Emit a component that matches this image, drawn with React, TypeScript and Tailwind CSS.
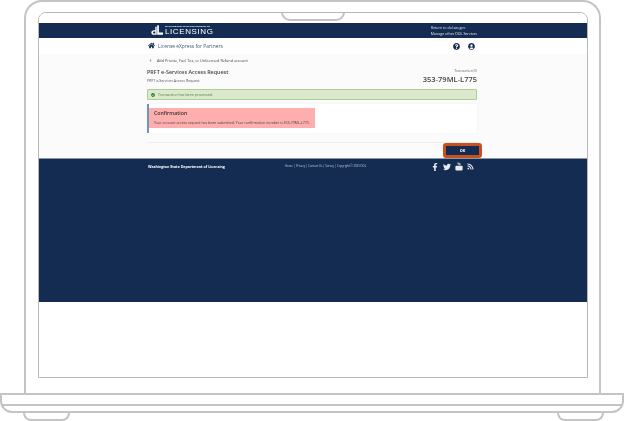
import { FaFacebookF, FaTwitter, FaRss, FaHome, FaQuestionCircle, FaUserCircle, FaCheckCircle, FaChevronLeft } from "react-icons/fa";

function Foot() {
  return <div className="w-[47px] h-[8px] border-2 border-t-0 border-[#c4c4c4] rounded-b-[8px]" />;
}

function DolMark() {
  return (
    <svg viewBox="0 0 14 12" className="w-[12px] h-[11px]" fill="white">
      <path d="M7.2 0h2v8.4H14V11H7.2z" />
      <path d="M5 1.5h1.6V11H3.4C1.6 11 .4 9.9.4 8.3S1.6 5.6 3.4 5.6H5zM3.6 7.2c-.7 0-1.2.4-1.2 1.1s.5 1.1 1.2 1.1H5V7.2z" />
    </svg>
  );
}

function StackedYoutube() {
  return (
    <svg viewBox="0 0 10 10" className="w-[8px] h-[9px]" fill="#e8ebf0">
      <path d="M2.6 0h.8l.5 1.2L4.4 0h.8l-.9 2v1.4h-.7V2zM6 .7c.5 0 .8.3.8.8v1.1c0 .5-.3.8-.8.8s-.8-.3-.8-.8V1.500c0-.5.3-.8.8-.8z" />
      <rect x="0.5" y="4.2" width="9" height="5.8" rx="1.2" />
    </svg>
  );
}

export default function App() {
  return (
    <div className="relative w-[624px] h-[421px] bg-white overflow-hidden font-['Open_Sans',sans-serif]">
      {/* Lid */}
      <div className="ml-[24px] w-[577px] h-[393px] border-2 border-b-0 border-[#c4c4c4] rounded-t-[18px] pl-[12px] pr-[11px] pt-[10px]">
        <div className="relative h-[366px] border-[1.5px] border-[#b8b8b8] rounded-t-[8px] overflow-hidden flex flex-col">
          <div className="absolute left-[242px] top-[-2px] w-[64px] h-[10px] border-2 border-t-0 border-[#c4c4c4] rounded-b-[9px] bg-white" />

          <div className="h-[10px] shrink-0 bg-white" />
          <div className="blur-[0.3px] flex flex-col">
            {/* Top bar */}
            <header className="h-[15px] shrink-0 bg-[#152c52] flex justify-center">
              <div className="w-[330px] mr-[2px] flex items-center justify-between text-white">
                <div className="flex items-end gap-[2px] pl-[4px]">
                  <DolMark />
                  <div className="flex flex-col">
                    <span className="text-[2.4px] leading-[3px] font-bold">WASHINGTON STATE DEPARTMENT OF</span>
                    <span className="text-[8px] leading-[8px] tracking-[0.6px] font-['Liberation_Sans',sans-serif]">LICENSING</span>
                  </div>
                </div>
                <div className="text-[3.6px] leading-[6px] text-[#dfe5ee]">
                  <div>Return to dol.wa.gov</div>
                  <div>Manage other DOL Services</div>
                </div>
              </div>
            </header>

            {/* Nav row */}
            <nav className="h-[16px] shrink-0 bg-white flex justify-center">
              <div className="w-[330px] mr-[2px] flex items-center justify-between">
                <div className="flex items-center gap-[3px] pl-[1px]">
                  <FaHome className="w-[7px] h-[7px] text-[#152c52]" />
                  <span className="text-[4.9px] pt-[1px] text-[#3f5a78]">License eXpress for Partners</span>
                </div>
                <div className="flex items-center gap-[8px] pr-[2px]">
                  <FaQuestionCircle className="w-[7px] h-[7px] text-[#152c52]" />
                  <FaUserCircle className="w-[7px] h-[7px] text-[#152c52]" />
                </div>
              </div>
            </nav>

            {/* Page body */}
            <main className="h-[104px] shrink-0 bg-[#fbfbfb] flex justify-center">
              <div className="w-[330px] mr-[2px] flex flex-col">
                <div className="flex items-center gap-[5px] pl-[2px] pt-[2px] h-[11px] text-[#444]">
                  <FaChevronLeft className="w-[3px] h-[3px]" />
                  <span className="text-[3.75px]">Add Private, Fuel Tax, or Unlicensed Refund account</span>
                </div>
                <div className="flex justify-between mt-[3px] h-[21px]">
                  <div>
                    <div className="text-[5.4px] leading-[9px] font-semibold text-[#444]">PRFT e-Services Access Request</div>
                    <div className="text-[3.6px] leading-[7px] text-[#555]">PRFT e-Services Access Request</div>
                  </div>
                  <div className="text-right">
                    <div className="text-[3.4px] leading-[6px] text-[#666]">Transaction ID</div>
                    <div className="text-[7.5px] leading-[11px] font-semibold text-[#444]">353-79ML-L775</div>
                  </div>
                </div>
                <div className="h-[11px] flex items-center gap-[3px] pl-[3px] bg-[#dde9cf] border border-[#a9d08e] rounded-[1px]">
                  <FaCheckCircle className="w-[4px] h-[4px] text-[#2f7d32]" />
                  <span className="text-[3.6px] text-[#4c7a3a]">Transaction has been processed.</span>
                </div>
                <div className="mt-[4px] h-[29px] bg-white border-l-[2px] border-[#6f93c4] pt-[4px] shadow-[0_0_2px_#eeeeee]">
                  <div className="w-[166px] h-[20px] bg-[#ffaeae] px-[5px]">
                    <div className="text-[5.2px] leading-[11px] font-semibold text-[#333]">Confirmation</div>
                    <div className="text-[3.5px] leading-[7px] text-[#444]">Your account access request has been submitted. Your confirmation number is 353-79ML-L775.</div>
                  </div>
                </div>
                <div className="mt-[9px] h-px bg-[#eeeeee]" />
                <div className="relative">
                  <div className="absolute right-[-5px] top-0 w-[39px] h-[15px] bg-[#152c52] border-[3px] border-[#c8501e] rounded-[3px] flex items-center justify-center text-[3.8px] font-bold text-white">
                    OK
                  </div>
                </div>
              </div>
            </main>

            {/* Footer */}
            <footer className="h-[144px] shrink-0 bg-[#152c52] border-t border-[#8a97ab] flex justify-center">
              <div className="w-[330px] mr-[2px] h-[15px] grid grid-cols-[138px_147px_1fr] items-center text-white">
                <span className="text-[3.6px] font-bold pl-[1px]">Washington State Department of Licensing</span>
                <span className="text-[2.8px] text-[#c6cedb]">Home | Privacy | Contact Us | Survey | Copyright © 2025 DOL</span>
                <div className="flex items-center gap-[4px] -ml-[1px]">
                  <FaFacebookF className="w-[8px] h-[8px] text-[#e8ebf0]" />
                  <FaTwitter className="w-[8px] h-[8px] text-[#e8ebf0]" />
                  <StackedYoutube />
                  <FaRss className="w-[7px] h-[7px] text-[#e8ebf0]" />
                </div>
              </div>
            </footer>
          </div>
        </div>
      </div>

      {/* Base */}
      <div className="w-[624px] h-[20px] border-2 border-[#c4c4c4] rounded-b-[12px] bg-white flex flex-col">
        <div className="h-[11px] border-b-2 border-[#c4c4c4]" />
      </div>
      <div className="flex justify-between pl-[23px] pr-[20px]">
        <Foot />
        <Foot />
      </div>
    </div>
  );
}
